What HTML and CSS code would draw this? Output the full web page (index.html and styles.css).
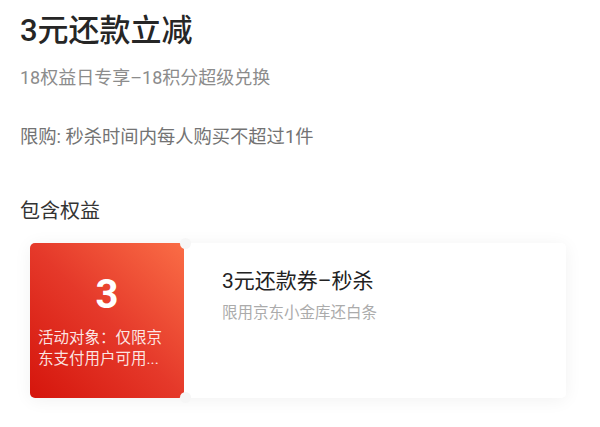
FILE: index.html
```html
<!DOCTYPE html>
<html lang="zh-CN">
<head>
    <meta charset="UTF-8">
    <meta name="viewport" content="width=device-width, initial-scale=1.0">
    <title>3元还款立减</title>
    <link rel="stylesheet" href="styles.css">
</head>
<body>
    <div class="page">
        <h1 class="title">3元还款立减</h1>
        <p class="subtitle">18权益日专享–18积分超级兑换</p>
        <p class="limit">限购: 秒杀时间内每人购买不超过1件</p>

        <h2 class="section-title">包含权益</h2>
        <div class="coupon">
            <div class="coupon-left">
                <div class="coupon-amount">3</div>
                <div class="coupon-target">活动对象：仅限京东支付用户可用...</div>
            </div>
            <div class="coupon-right">
                <div class="coupon-name">3元还款券–秒杀</div>
                <div class="coupon-desc">限用京东小金库还白条</div>
            </div>
        </div>
    </div>
</body>
</html>
```

FILE: styles.css
```css
body {
    margin: 0;
    background: #fff;
    font-family: Roboto, "Noto Sans CJK SC", sans-serif;
    color: #222;
}
.page {
    padding: 11px 20px 20px;
}
.title {
    margin: 0;
    font-size: 31px;
    line-height: 40px;
    font-weight: 500;
    color: #262626;
}
.subtitle {
    margin: 14px 0 0;
    font-size: 18px;
    line-height: 26px;
    color: #8c8c8c;
}
.limit {
    margin: 33px 0 0;
    font-size: 18.3px;
    line-height: 26px;
    color: #737373;
}
.section-title {
    margin: 47px 0 0;
    font-size: 20px;
    line-height: 28px;
    font-weight: 400;
    color: #333;
}

/* coupon card */
.coupon {
    display: flex;
    gap: 3px;
    width: 536px;
    height: 155px;
    margin: 18px 0 0 10px;
    border-radius: 5px;
    box-shadow: 0 2px 18px rgba(0, 0, 0, 0.06);
}
.coupon-left {
    position: relative;
    width: 154px;
    flex-shrink: 0;
    box-sizing: border-box;
    padding: 30px 8px 0;
    border-radius: 5px;
    background: linear-gradient(45deg, #d5150c 0%, #e5392a 50%, #fa6d46 100%);
    color: #fff;
    text-align: center;
}
/* half-circle notches where the two halves meet */
.coupon-left::before,
.coupon-left::after {
    content: "";
    position: absolute;
    right: -7px;
    width: 11px;
    height: 11px;
    border-radius: 50%;
    background: #f6f6f6;
}
.coupon-left::before {
    top: -5px;
}
.coupon-left::after {
    bottom: -5px;
}
.coupon-amount {
    font-size: 40px;
    line-height: 44px;
    font-weight: 700;
}
.coupon-target {
    margin-top: 11px;
    font-size: 15.5px;
    line-height: 21px;
    text-align: left;
    color: rgba(255, 255, 255, 0.88);
}
.coupon-right {
    flex: 1;
    padding: 24px 20px 0 35px;
    border-radius: 5px;
    background: #fff;
}
.coupon-name {
    font-size: 21px;
    line-height: 28px;
    color: #222;
}
.coupon-desc {
    margin-top: 7px;
    font-size: 15.5px;
    line-height: 22px;
    color: #ababab;
}
```
